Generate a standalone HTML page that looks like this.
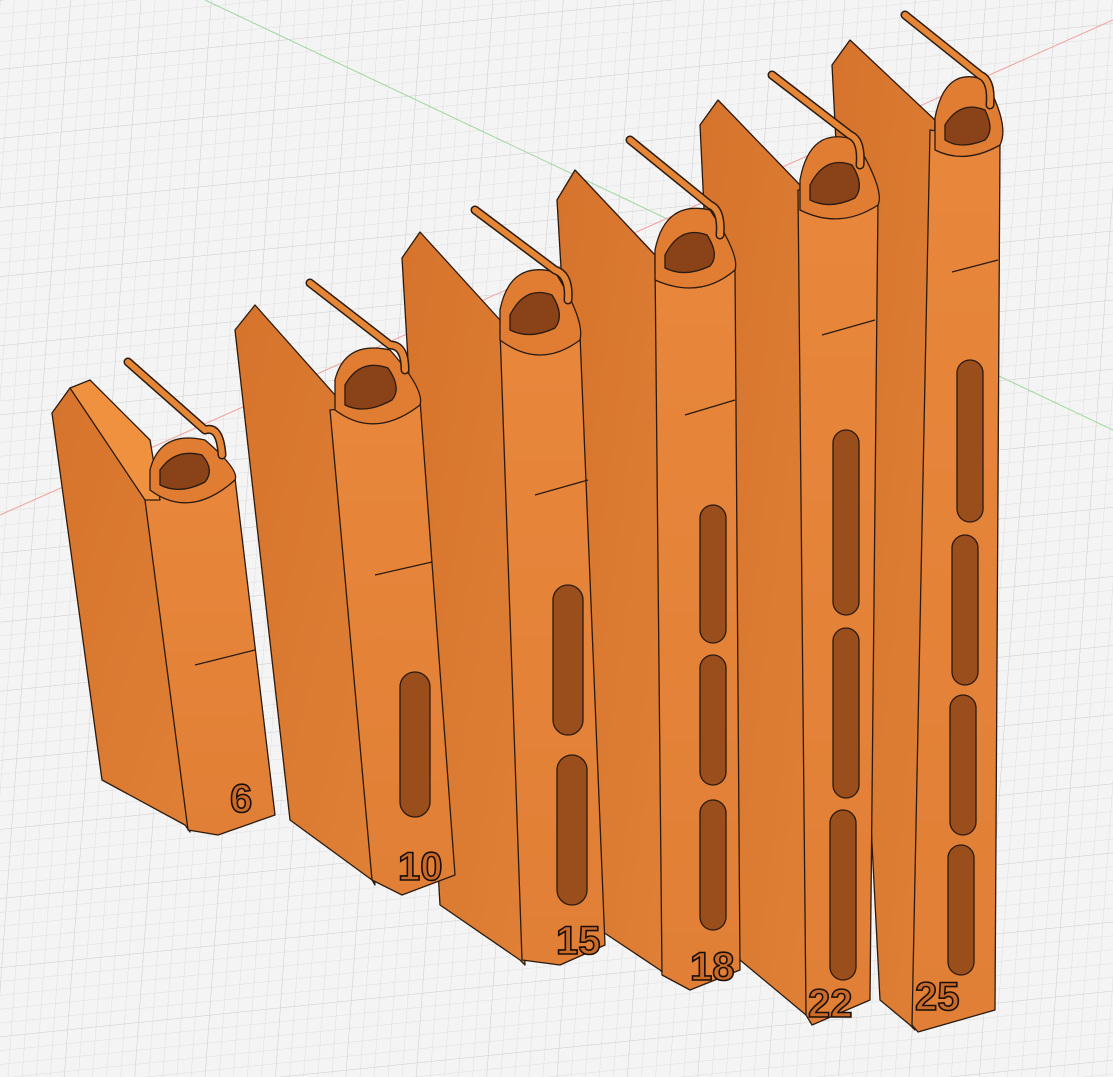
<!DOCTYPE html>
<html><head><meta charset="utf-8"><style>
html,body{margin:0;padding:0;width:1113px;height:1077px;overflow:hidden;background:#f3f3f3}
svg{display:block}
text{font-family:"Liberation Sans",sans-serif;font-weight:bold}
</style></head><body>
<svg width="1113" height="1077" viewBox="0 0 1113 1077" xmlns="http://www.w3.org/2000/svg">
<defs>
<pattern id="g" width="14" height="14" patternUnits="userSpaceOnUse" patternTransform="skewX(-10) rotate(-6)">
<path d="M14 0H0V14" fill="none" stroke="#dedede" stroke-width="1"/>
</pattern>
<pattern id="g2" width="70" height="70" patternUnits="userSpaceOnUse" patternTransform="skewX(-10) rotate(-6)">
<path d="M70 0H0V70" fill="none" stroke="#d2d2d2" stroke-width="1"/>
</pattern>
<linearGradient id="side" x1="0" y1="0" x2="1" y2="1">
<stop offset="0" stop-color="#d6732c"/><stop offset="1" stop-color="#df8036"/>
</linearGradient>
<linearGradient id="front" x1="0" y1="0" x2="0" y2="1">
<stop offset="0" stop-color="#e8873c"/><stop offset="1" stop-color="#e07f35"/>
</linearGradient>
</defs>
<rect width="1113" height="1077" fill="#f4f4f4"/>
<rect width="1113" height="1077" fill="url(#g)"/>
<rect width="1113" height="1077" fill="url(#g2)"/>
<line x1="205" y1="0" x2="1113" y2="430" stroke="#9fd79f" stroke-width="1"/>
<line x1="0" y1="515" x2="1113" y2="20" stroke="#f0a0a0" stroke-width="1"/>
<g stroke="#2a1a10" stroke-width="1.3" stroke-linejoin="round">
<!-- mag 25 -->
<g>
<polygon points="832,65 850,40 935,120 915,1030 910,1025 880,1000" fill="url(#side)"/>
<polygon points="930,130 1000,140 995,1010 918,1032 912,1025" fill="url(#front)"/>
<path d="M935,118 Q945,65 985,80 Q1010,125 1000,145 Q965,165 935,150Z" fill="#e07d33"/>
<path d="M945,125 Q960,100 985,110 Q995,130 985,140 Q960,150 945,140Z" fill="#8a4218"/>
<path d="M905,15 L980,75 Q992,80 990,105" fill="none" stroke="#2a1a10" stroke-width="9" stroke-linecap="round"/>
<path d="M905,15 L980,75 Q992,80 990,105" fill="none" stroke="#e58536" stroke-width="6" stroke-linecap="round"/>
<line x1="952" y1="272" x2="998" y2="260"/>
<rect x="957" y="360" width="26" height="162" rx="13" fill="#9a4e1c"/>
<rect x="952" y="535" width="26" height="150" rx="13" fill="#9a4e1c"/>
<rect x="950" y="695" width="26" height="140" rx="13" fill="#9a4e1c"/>
<rect x="948" y="845" width="26" height="130" rx="13" fill="#9a4e1c"/>
</g>
<!-- mag 22 -->
<g>
<polygon points="700,125 718,100 800,185 810,1020 806,1015 740,960" fill="url(#side)"/>
<polygon points="798,190 878,200 870,1000 812,1025 806,1015" fill="url(#front)"/>
<path d="M800,180 Q810,125 855,140 Q885,190 878,205 Q840,230 800,210Z" fill="#e07d33"/>
<path d="M810,185 Q825,155 852,165 Q865,185 855,198 Q830,210 810,200Z" fill="#8a4218"/>
<path d="M772,75 L850,135 Q862,140 860,165" fill="none" stroke="#2a1a10" stroke-width="9" stroke-linecap="round"/>
<path d="M772,75 L850,135 Q862,140 860,165" fill="none" stroke="#e58536" stroke-width="6" stroke-linecap="round"/>
<line x1="822" y1="335" x2="875" y2="320"/>
<rect x="833" y="430" width="26" height="185" rx="13" fill="#9a4e1c"/>
<rect x="833" y="628" width="26" height="170" rx="13" fill="#9a4e1c"/>
<rect x="830" y="810" width="26" height="170" rx="13" fill="#9a4e1c"/>
</g>
<!-- mag 18 -->
<g>
<polygon points="557,200 575,170 655,255 665,975 660,970 600,930" fill="url(#side)"/>
<polygon points="655,260 735,268 740,970 690,990 662,975" fill="url(#front)"/>
<path d="M655,250 Q665,200 710,210 Q740,255 735,270 Q700,300 655,280Z" fill="#e07d33"/>
<path d="M665,255 Q680,225 707,235 Q720,255 710,266 Q685,278 665,268Z" fill="#8a4218"/>
<path d="M630,140 L710,205 Q722,210 720,235" fill="none" stroke="#2a1a10" stroke-width="9" stroke-linecap="round"/>
<path d="M630,140 L710,205 Q722,210 720,235" fill="none" stroke="#e58536" stroke-width="6" stroke-linecap="round"/>
<line x1="685" y1="415" x2="735" y2="400"/>
<rect x="700" y="505" width="26" height="138" rx="13" fill="#9a4e1c"/>
<rect x="700" y="655" width="26" height="130" rx="13" fill="#9a4e1c"/>
<rect x="700" y="800" width="26" height="130" rx="13" fill="#9a4e1c"/>
</g>
<!-- mag 15 -->
<g>
<polygon points="402,258 420,232 500,320 525,965 520,960 440,905" fill="url(#side)"/>
<polygon points="500,330 580,335 605,945 560,965 522,960" fill="url(#front)"/>
<path d="M500,310 Q510,260 555,272 Q585,320 580,340 Q540,370 500,340Z" fill="#e07d33"/>
<path d="M510,315 Q525,285 552,295 Q565,315 555,328 Q530,340 510,330Z" fill="#8a4218"/>
<path d="M475,210 L555,270 Q570,275 568,300" fill="none" stroke="#2a1a10" stroke-width="9" stroke-linecap="round"/>
<path d="M475,210 L555,270 Q570,275 568,300" fill="none" stroke="#e58536" stroke-width="6" stroke-linecap="round"/>
<line x1="535" y1="495" x2="588" y2="480"/>
<rect x="553" y="585" width="30" height="150" rx="15" fill="#9a4e1c"/>
<rect x="557" y="755" width="30" height="150" rx="15" fill="#9a4e1c"/>
</g>
<!-- mag 10 -->
<g>
<polygon points="235,330 255,305 335,395 375,885 372,880 290,820" fill="url(#side)"/>
<polygon points="330,410 420,400 455,875 402,895 372,880" fill="url(#front)"/>
<path d="M335,380 Q345,340 390,350 Q425,390 420,405 Q375,440 335,410Z" fill="#e07d33"/>
<path d="M345,385 Q360,358 388,368 Q402,388 392,400 Q365,415 345,405Z" fill="#8a4218"/>
<path d="M310,283 L390,345 Q405,345 405,370" fill="none" stroke="#2a1a10" stroke-width="9" stroke-linecap="round"/>
<path d="M310,283 L390,345 Q405,345 405,370" fill="none" stroke="#e58536" stroke-width="6" stroke-linecap="round"/>
<line x1="375" y1="575" x2="432" y2="562"/>
<rect x="400" y="672" width="30" height="145" rx="15" fill="#9a4e1c"/>
</g>
<!-- mag 6 -->
<g>
<polygon points="52,413 70,388 150,470 190,832 185,825 102,780" fill="url(#side)"/>
<polygon points="145,500 235,478 275,815 218,835 188,830" fill="url(#front)"/>
<polygon points="70,388 90,380 150,440 160,500 145,500" fill="#f0913f"/>
<path d="M150,470 Q160,430 205,440 Q240,470 235,480 Q190,520 150,490Z" fill="#e07d33"/>
<path d="M160,470 Q175,448 202,455 Q215,470 205,482 Q180,495 160,485Z" fill="#8a4218"/>
<path d="M128,362 L205,430 Q220,425 222,455" fill="none" stroke="#2a1a10" stroke-width="9" stroke-linecap="round"/>
<path d="M128,362 L205,430 Q220,425 222,455" fill="none" stroke="#e58536" stroke-width="6" stroke-linecap="round"/>
<line x1="195" y1="665" x2="255" y2="650"/>
</g>
</g>
<g fill="#c96a28" stroke="#1a0e06" stroke-width="1.6" font-size="40">
<text x="230" y="812">6</text>
<text x="398" y="880">10</text>
<text x="556" y="954">15</text>
<text x="690" y="980">18</text>
<text x="808" y="1017">22</text>
<text x="915" y="1010">25</text>
</g>
</svg>
</body></html>
